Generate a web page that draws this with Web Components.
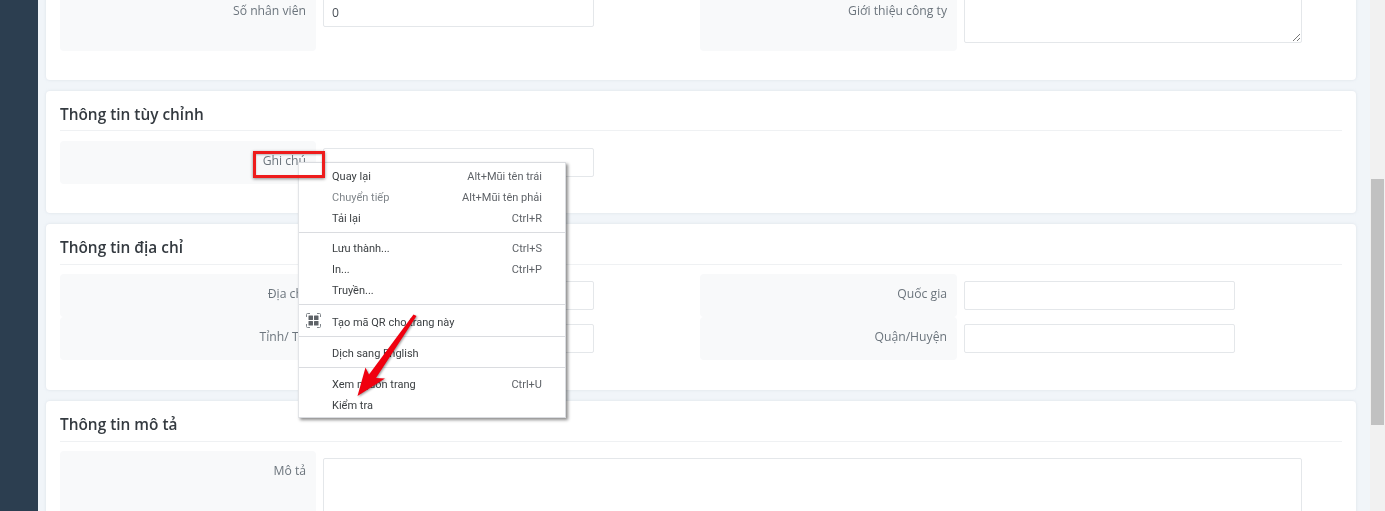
<!DOCTYPE html>
<html lang="vi">
<head>
<meta charset="utf-8">
<title>Thông tin</title>
<style>
    html, body { margin: 0; height: 100%; overflow: hidden; }
    body { font-family: "Open Sans", "Liberation Sans", sans-serif; background: #f1f5f9; }
</style>
</head>
<body>
<app-shell>
    <form-card cut="true">
        <form-row label="Số nhân viên" value="0"></form-row>
        <form-row label="Giới thiệu công ty" kind="intro" right></form-row>
    </form-card>
    <form-card heading="Thông tin tùy chỉnh" short>
        <form-row label="Ghi chú"></form-row>
    </form-card>
    <form-card heading="Thông tin địa chỉ">
        <form-row label="Địa chỉ"></form-row>
        <form-row label="Quốc gia" right></form-row>
        <form-row label="Tỉnh/ TP"></form-row>
        <form-row label="Quận/Huyện" right></form-row>
    </form-card>
    <form-card heading="Thông tin mô tả">
        <form-row label="Mô tả" kind="wide"></form-row>
    </form-card>
    <context-menu slot="overlay"></context-menu>
    <note-marks slot="overlay"></note-marks>
</app-shell>

<script>
class AppShell extends HTMLElement {
    constructor() {
        super();
        this.attachShadow({ mode: 'open' });
        this.shadowRoot.innerHTML = `
            <style>
                :host { display: flex; height: 511px; position: relative; overflow: hidden; filter: blur(.3px); }
                .side { width: 38px; flex: none; background: #2c3e50; }
                .main { flex: 1; min-width: 0; padding: 0 14px 0 8px; display: flex; flex-direction: column; gap: 11px; overflow: hidden; }
                .bar { width: 15px; flex: none; background: #f1f1f1; display: flex; padding: 179px 1px 0; box-sizing: border-box; }
                .thumb { flex: 1; height: 246px; background: #c1c1c1; }
            </style>
            <div class="side"></div>
            <div class="main"><slot></slot></div>
            <div class="bar"><div class="thumb"></div></div>
            <slot name="overlay"></slot>
        `;
    }
}

class FormCard extends HTMLElement {
    constructor() {
        super();
        this.attachShadow({ mode: 'open' });
    }

    connectedCallback() {
        const heading = this.getAttribute('heading');
        this.shadowRoot.innerHTML = `
            <style>
                :host { display: block; flex: none; background: #fff; border-radius: 4px; box-shadow: 0 0 3px rgba(180, 190, 200, .35); padding: 0 14px 30px; }
                :host([short]) { padding-bottom: 29px; }
                :host([cut]) { margin-top: -9px; height: 59px; border-radius: 0 0 4px 4px; }
                h2 { margin: 0 0 9px; height: 41px; box-sizing: border-box; border-bottom: 1px solid #eff1f3; font: 600 15.4px/48px "Open Sans", sans-serif; color: #343a40; }
                :host([short]) h2 { margin-bottom: 10px; height: 40px; }
                .grid { display: grid; grid-template-columns: 640px 1fr; }
            </style>
            ${heading ? `<h2>${heading}</h2>` : ''}
            <div class="grid"><slot></slot></div>
        `;
    }
}

class FormRow extends HTMLElement {
    constructor() {
        super();
        this.attachShadow({ mode: 'open' });
    }

    connectedCallback() {
        const kind = this.getAttribute('kind') || 'input';
        const value = this.getAttribute('value') || '';
        let field = `<div class="input">${value}</div>`;
        if (kind === 'intro') field = `<div class="input area intro"><svg width="10" height="10" viewBox="0 0 10 10"><path d="M9 2 2 9M9 6 6 9" stroke="#777" fill="none"/></svg></div>`;
        if (kind === 'wide') field = `<div class="input area wide"></div>`;
        this.shadowRoot.innerHTML = `
            <style>
                :host { display: flex; align-items: stretch; gap: 7px; font-size: 12.2px; color: #6c757d; height: 43px; }
                :host([kind="wide"]) { grid-column: 1 / -1; height: 120px; }
                :host([kind="intro"]), :host([value]) { height: 60px; }
                label { width: 256px; flex: none; box-sizing: border-box; background: #f8f9fa; border-radius: 4px; text-align: right; padding: 12px 10px 0 0; line-height: 16px; }
                :host([right]) label { width: 257px; }
                .input { width: 271px; height: 29px; margin-top: 7px; box-sizing: border-box; border: 1px solid #e4e7ea; border-radius: 2px; background: #fff; padding: 7px 8px; color: #495057; line-height: 14px; }
                .area { position: relative; width: 338px; }
                .intro { height: 45px; }
                .wide { width: 979px; height: 120px; }
                svg { position: absolute; right: 0; bottom: 0; }
            </style>
            <label>${this.getAttribute('label')}</label>
            ${field}
        `;
    }
}

class MenuItem extends HTMLElement {
    constructor() {
        super();
        this.attachShadow({ mode: 'open' });
        this.shadowRoot.innerHTML = `
            <style>
                :host { display: flex; justify-content: space-between; align-items: center; height: 21px; padding: 0 23px 0 33px; color: #3c4043; }
                :host([off]) { color: #80868b; }
                .key { color: #5f6368; }
            </style>
            <span><slot></slot></span>
            <span class="key"><slot name="key"></slot></span>
        `;
    }
}

class ContextMenu extends HTMLElement {
    constructor() {
        super();
        this.attachShadow({ mode: 'open' });
        this.shadowRoot.innerHTML = `
            <style>
                :host { position: absolute; left: 298px; top: 162px; width: 268px; height: 256px; box-sizing: border-box; padding-top: 3px; background: #fff; border: 1px solid #dadce0; border-left-color: #e3e5e8; box-shadow: 2px 2px 3px rgba(0, 0, 0, .45); font: 11px "Roboto", sans-serif; z-index: 2; }
                hr { border: 0; border-top: 1px solid #dadce0; margin: 3px 0 5px; }
                hr.far { margin-bottom: 6px; }
                .qr { position: relative; height: 22px; display: flex; }
                .qr menu-item { flex: 1; height: 22px; }
                svg { position: absolute; left: 7px; top: 2px; }
            </style>
            <menu-item>Quay lại<span slot="key">Alt+Mũi tên trái</span></menu-item>
            <menu-item off>Chuyển tiếp<span slot="key">Alt+Mũi tên phải</span></menu-item>
            <menu-item>Tải lại<span slot="key">Ctrl+R</span></menu-item>
            <hr>
            <menu-item>Lưu thành...<span slot="key">Ctrl+S</span></menu-item>
            <menu-item>In...<span slot="key">Ctrl+P</span></menu-item>
            <menu-item>Truyền...</menu-item>
            <hr class="far">
            <div class="qr">
                <svg width="15" height="15" viewBox="0 0 15 15">
                    <path d="M.5 4V1.500a1 1 0 0 1 1-1H4M11 .5h2.500a1 1 0 0 1 1 1V4M14.500 11v2.500a1 1 0 0 1-1 1H11M4 14.500H1.500a1 1 0 0 1-1-1V11" fill="none" stroke="#80868b"/>
                    <rect x="2.500" y="2.500" width="4.500" height="4.500" rx=".5" fill="#5f6368"/>
                    <rect x="8" y="2.500" width="4.500" height="4.500" rx=".5" fill="#5f6368"/>
                    <rect x="2.500" y="8" width="4.500" height="4.500" rx=".5" fill="#5f6368"/>
                    <rect x="8" y="8" width="4.500" height="4.500" rx=".5" fill="#5f6368"/>
                </svg>
                <menu-item>Tạo mã QR cho trang này</menu-item>
            </div>
            <hr class="far">
            <menu-item>Dịch sang English</menu-item>
            <hr class="far">
            <menu-item>Xem nguồn trang<span slot="key">Ctrl+U</span></menu-item>
            <menu-item>Kiểm tra</menu-item>
        `;
    }
}

class NoteMarks extends HTMLElement {
    constructor() {
        super();
        this.attachShadow({ mode: 'open' });
        this.shadowRoot.innerHTML = `
            <style>
                :host { position: absolute; inset: 0; pointer-events: none; z-index: 3; }
                .box { position: absolute; left: 253px; top: 151px; width: 72px; height: 27px; box-sizing: border-box; border: 3px solid #ee1c1c; box-shadow: 0 1px 3px rgba(0,0,0,.45), inset 0 1px 2px rgba(0,0,0,.25); }
                svg { position: absolute; left: 0; top: 0; filter: drop-shadow(1px 1px 1px rgba(0,0,0,.4)); }
            </style>
            <div class="box"></div>
            <svg width="1385" height="511"><path d="M413.500 314.500 416.500 316 376 378 385 378.500 357.500 396 365.500 367.500 369 374.500Z" fill="#f0000f"/></svg>
        `;
    }
}

customElements.define('app-shell', AppShell);
customElements.define('form-card', FormCard);
customElements.define('form-row', FormRow);
customElements.define('menu-item', MenuItem);
customElements.define('context-menu', ContextMenu);
customElements.define('note-marks', NoteMarks);
</script>
</body>
</html>
